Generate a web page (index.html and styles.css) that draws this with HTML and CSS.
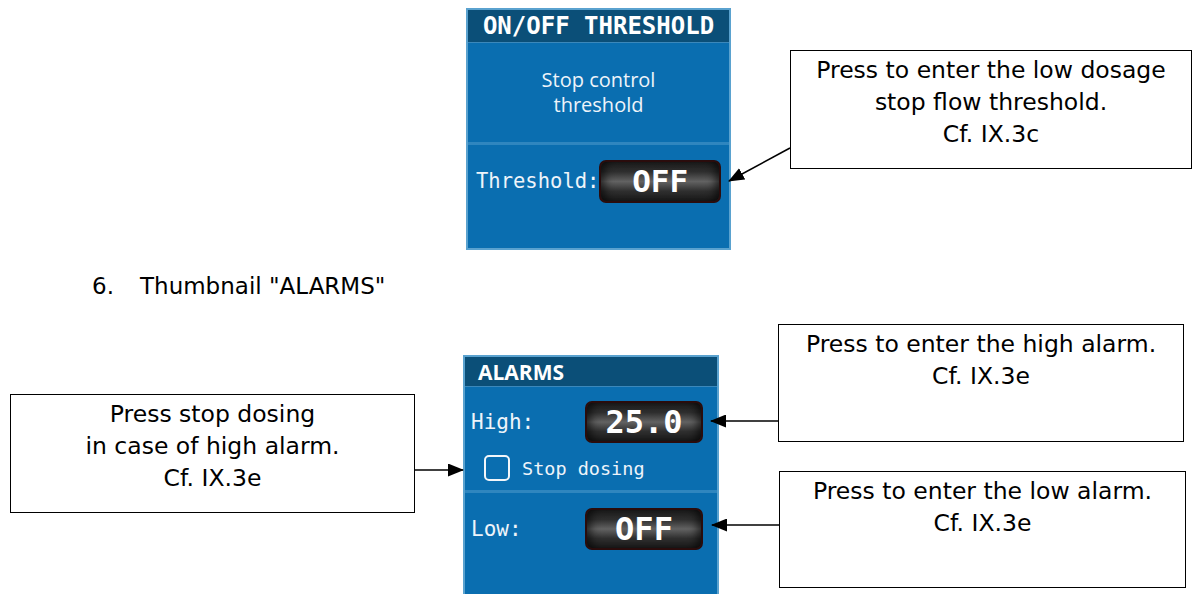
FILE: index.html
```html
<!DOCTYPE html>
<html>
<head>
<meta charset="utf-8">
<link rel="stylesheet" href="styles.css">
</head>
<body>
<div class="fig fig1">
  <div class="panel panel1">
    <div class="phead mono-head">ON/OFF THRESHOLD</div>
    <div class="psec desc">Stop control<br>threshold</div>
    <div class="psec row1">
      <span class="lbl">Threshold:</span>
      <span class="btn">OFF</span>
    </div>
  </div>
  <div class="callout c1">Press to enter the low dosage<br>stop flow threshold.<br>Cf. IX.3c</div>
  <svg class="arrows" width="1193" height="262">
    <defs>
      <marker id="ah1" markerWidth="16" markerHeight="13" refX="15" refY="6.5" orient="auto" markerUnits="userSpaceOnUse">
        <path d="M0,0 L16,6.5 L0,13 Z" fill="#000"/>
      </marker>
    </defs>
    <line x1="790" y1="148" x2="729" y2="181" stroke="#000" stroke-width="1.6" marker-end="url(#ah1)"/>
  </svg>
</div>
<div class="heading"><span class="num">6.</span>Thumbnail "ALARMS"</div>
<div class="fig fig2">
  <div class="panel panel2">
    <div class="phead sans-head">ALARMS</div>
    <div class="psec hi">
      <div class="row2">
        <span class="lbl">High:</span>
        <span class="btn btn2">25.0</span>
      </div>
      <div class="chk"><span class="box"></span><span class="chklbl">Stop dosing</span></div>
    </div>
    <div class="psec lo">
      <div class="row2">
        <span class="lbl">Low:</span>
        <span class="btn btn2">OFF</span>
      </div>
    </div>
  </div>
  <div class="callout c2">Press stop dosing<br>in case of high alarm.<br>Cf. IX.3e</div>
  <div class="callout c3">Press to enter the high alarm.<br>Cf. IX.3e</div>
  <div class="callout c4">Press to enter the low alarm.<br>Cf. IX.3e</div>
  <svg class="arrows" width="1193" height="284">
    <defs>
      <marker id="ah2" markerWidth="16" markerHeight="13" refX="15" refY="6.5" orient="auto" markerUnits="userSpaceOnUse">
        <path d="M0,0 L16,6.5 L0,13 Z" fill="#000"/>
      </marker>
    </defs>
    <line x1="415" y1="160" x2="463" y2="160" stroke="#000" stroke-width="1.6" marker-end="url(#ah2)"/>
    <line x1="778" y1="111" x2="711" y2="111" stroke="#000" stroke-width="1.6" marker-end="url(#ah2)"/>
    <line x1="779" y1="215" x2="712" y2="215" stroke="#000" stroke-width="1.6" marker-end="url(#ah2)"/>
  </svg>
</div>
</body>
</html>
```
FILE: styles.css
```css
html, body {
  margin: 0;
  padding: 0;
  background: #fff;
}
body {
  width: 1193px;
  height: 594px;
  overflow: hidden;
  font-family: "DejaVu Sans", sans-serif;
  color: #000;
}
.fig {
  position: relative;
}
.fig1 { height: 262px; }
.fig2 { height: 284px; }
.arrows {
  position: absolute;
  left: 0;
  top: 0;
  pointer-events: none;
}
.heading {
  height: 48px;
  line-height: 48px;
  font-size: 23px;
  padding-left: 92px;
}
.heading .num {
  display: inline-block;
  width: 48px;
}
.panel {
  box-sizing: border-box;
  background: #0a6eb0;
  border: 2px solid #5aa2cf;
  color: #eef4fa;
  display: flex;
  flex-direction: column;
}
.panel1 {
  margin-left: 466px;
  position: relative;
  top: 8px;
  width: 265px;
  height: 242px;
}
.panel2 {
  margin-left: 463px;
  position: relative;
  top: 45px;
  width: 256px;
  height: 260px;
}
.phead {
  background: #0b4f78;
  border-bottom: 1px solid #3b88bb;
  color: #fff;
  font-weight: bold;
}
.mono-head {
  height: 32px;
  line-height: 33px;
  font-family: "DejaVu Sans Mono", monospace;
  font-size: 24px;
  text-align: center;
}
.sans-head {
  height: 29px;
  line-height: 31px;
  font-family: "Open Sans", "Noto Sans", sans-serif;
  font-size: 21px;
  padding-left: 13px;
}
.psec {
  border-top: 3px solid #2f86bf;
}
.desc {
  border-top: none;
  height: 99px;
  box-sizing: border-box;
  padding-top: 24px;
  text-align: center;
  font-family: "Open Sans", "Noto Sans", sans-serif;
  font-size: 20px;
  line-height: 25px;
}
.row1 {
  flex: 1;
  display: flex;
  align-items: flex-start;
  justify-content: space-between;
  padding: 15px 8px 0 8px;
}
.lbl {
  font-family: "DejaVu Sans Mono", monospace;
  font-size: 20.5px;
  line-height: 43px;
}
.btn {
  box-sizing: border-box;
  width: 123px;
  height: 43px;
  border: 2px solid #2a0c0c;
  border-radius: 7px;
  background: linear-gradient(to bottom, #1d1d1d 0%, #2e2e2e 25%, #626262 50%, #2e2e2e 75%, #1b1b1b 100%);
  box-shadow: inset 8px 0 8px -4px rgba(0,0,0,0.6), inset -8px 0 8px -4px rgba(0,0,0,0.6);
  color: #fff;
  font-family: "DejaVu Sans Mono", monospace;
  font-weight: bold;
  font-size: 31px;
  line-height: 39px;
  text-align: center;
}
.hi {
  border-top: none;
  height: 103px;
  box-sizing: border-box;
  padding-top: 14px;
}
.row2 {
  display: flex;
  justify-content: space-between;
  padding: 0 14px 0 6px;
}
.btn2 {
  width: 118px;
  height: 42px;
  line-height: 38px;
  font-size: 32px;
}
.row2 .lbl {
  font-size: 21px;
  line-height: 42px;
}
.chk {
  display: flex;
  align-items: center;
  margin-top: 12px;
  padding-left: 19px;
}
.box {
  box-sizing: border-box;
  width: 26px;
  height: 26px;
  border: 2.5px solid #f2f6fa;
  border-radius: 5px;
}
.chklbl {
  margin-left: 12px;
  font-family: "DejaVu Sans Mono", monospace;
  font-size: 18.5px;
}
.lo {
  flex: 1;
  padding-top: 15px;
}
.callout {
  position: absolute;
  box-sizing: border-box;
  border: 1.5px solid #000;
  background: #fff;
  text-align: center;
  font-size: 23.5px;
  line-height: 32px;
  padding-top: 3px;
}
.c1 { left: 790px; top: 50px; width: 402px; height: 119px; }
.c2 { left: 10px; top: 84px; width: 405px; height: 119px; }
.c3 { left: 778px; top: 14px; width: 406px; height: 118px; }
.c4 { left: 779px; top: 161px; width: 407px; height: 117px; }
```
